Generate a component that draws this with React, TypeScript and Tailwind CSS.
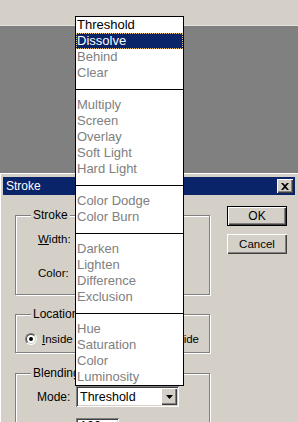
import React from "react";

const modes: (string | null)[] = [
  "Threshold",
  "Dissolve",
  "Behind",
  "Clear",
  null,
  "Multiply",
  "Screen",
  "Overlay",
  "Soft Light",
  "Hard Light",
  null,
  "Color Dodge",
  "Color Burn",
  null,
  "Darken",
  "Lighten",
  "Difference",
  "Exclusion",
  null,
  "Hue",
  "Saturation",
  "Color",
  "Luminosity",
];

const raised =
  "shadow-[inset_1px_1px_0_#fff,inset_-1px_-1px_0_#404040,inset_-2px_-2px_0_#808080]";
const sunken =
  "shadow-[inset_1px_1px_0_#808080,inset_-1px_-1px_0_#fff,inset_2px_2px_0_#404040,inset_-2px_-2px_0_#d4d0c8]";
const etched =
  "border border-[#808080] shadow-[1px_1px_0_#fff,inset_1px_1px_0_#fff]";

function Group({
  label,
  className,
  children,
}: {
  label: string;
  className: string;
  children?: React.ReactNode;
}) {
  return (
    <div className={`relative w-[195px] ${etched} ${className}`}>
      <span className="absolute left-[15px] top-[-8px] bg-[#d4d0c8] px-[2px] text-[12px] leading-[14px]">
        {label}
      </span>
      {children}
    </div>
  );
}

function Radio({ checked }: { checked?: boolean }) {
  return (
    <span className="flex h-[12px] w-[12px] items-center justify-center rounded-full border border-t-[#808080] border-l-[#808080] border-r-white border-b-white">
      <span className="flex h-[10px] w-[10px] items-center justify-center rounded-full border border-t-[#404040] border-l-[#404040] border-r-[#d4d0c8] border-b-[#d4d0c8] bg-white">
        {checked && <span className="h-[4px] w-[4px] rounded-full bg-black" />}
      </span>
    </span>
  );
}

export default function App() {
  return (
    <div className="relative h-[422px] w-[298px] overflow-hidden bg-[#808080] font-['Liberation_Sans',Arial,sans-serif] text-black">
      {/* desktop strip */}
      <div className="h-[26px] border-b border-[#e4e2dc] bg-[#d4d0c8]" />
      <div className="h-[147px]" />

      {/* Stroke dialog */}
      <div className="h-[249px] bg-[#d4d0c8] px-[3px] pt-[4px] shadow-[inset_1px_1px_0_#fff]">
        <div className="flex h-[18px] items-center justify-between bg-[#0a246a] pl-[3px] pr-[2px]">
          <span className="text-[12px] leading-[14px] text-white">Stroke</span>
          <span
            className={`flex h-[14px] w-[16px] items-center justify-center bg-[#d4d0c8] ${raised}`}
          >
            <svg width="8" height="7" viewBox="0 0 8 7">
              <path
                d="M0 0h2l2 2 2-2h2L5 3.5 8 7H6L4 5 2 7H0l3-3.5z"
                fill="#000"
              />
            </svg>
          </span>
        </div>

        <div className="flex items-start">
          {/* groups */}
          <div className="ml-[12px] mt-[20px] flex flex-col">
            <Group label="Stroke" className="h-[80px]">
              <div className="flex flex-col gap-[20px] pl-[22px] pt-[16px] text-[11.5px] leading-[14px]">
                <span>
                  <span className="underline">W</span>idth:
                </span>
                <span>Color:</span>
              </div>
            </Group>

            <Group label="Location" className="mt-[19px] h-[39px]">
              <div className="flex items-center pl-[9px] pr-[10px] pt-[17px] text-[11.5px] leading-[14px]">
                <Radio checked />
                <span className="ml-[5px]">
                  <span className="underline">I</span>nside
                </span>
                <span className="ml-auto flex items-center">
                  <Radio />
                  <span className="ml-[5px]">Outside</span>
                </span>
              </div>
            </Group>

            <Group label="Blending" className="mt-[20px] h-[60px]">
              <div className="flex flex-col pl-[21px] pt-[12px]">
                <div className="flex items-center">
                  <span className="w-[39px] text-[12px] leading-[14px]">Mode:</span>
                  <div
                    className={`flex h-[21px] w-[103px] items-center justify-between bg-white pl-[4px] pr-[2px] ${sunken}`}
                  >
                    <span className="text-[12.5px] leading-[14px]">Threshold</span>
                    <span
                      className={`flex h-[17px] w-[16px] items-center justify-center bg-[#d4d0c8] ${raised}`}
                    >
                      <svg width="7" height="4" viewBox="0 0 7 4">
                        <path d="M0 0h7L3.5 4z" fill="#000" />
                      </svg>
                    </span>
                  </div>
                </div>
                <div
                  className={`ml-[39px] mt-[11px] h-[21px] w-[43px] bg-white pl-[4px] pt-[1px] text-[12.5px] leading-[14px] ${sunken}`}
                >
                  100
                </div>
              </div>
            </Group>
          </div>

          {/* buttons */}
          <div className="ml-[17px] mt-[11px] flex flex-col gap-[8px]">
            <div className="h-[20px] w-[60px] border border-black bg-[#d4d0c8]">
              <div
                className={`flex h-full w-full items-center justify-center text-[12px] leading-[14px] ${raised}`}
              >
                OK
              </div>
            </div>
            <div
              className={`flex h-[20px] w-[60px] items-center justify-center bg-[#d4d0c8] text-[11.5px] leading-[14px] ${raised}`}
            >
              Cancel
            </div>
          </div>
        </div>
      </div>

      {/* open blend mode list */}
      <div className="absolute left-[75px] top-[16px] w-[109px] border border-black bg-white">
        {modes.map((m, i) =>
          m === null ? (
            <div key={i} className="flex h-[16px] items-center">
              <div className="h-px w-full bg-black" />
            </div>
          ) : m === "Dissolve" ? (
            <div
              key={i}
              className="h-[16px] border border-dotted border-[#f2c46a] bg-[#0a246a] text-[13px] leading-[14px] text-white"
            >
              {m}
            </div>
          ) : (
            <div
              key={i}
              className={`h-[16px] pl-[1px] text-[13px] leading-[16px] ${
                m === "Threshold" ? "text-black" : "text-[#808080]"
              }`}
            >
              {m}
            </div>
          )
        )}
      </div>
    </div>
  );
}
